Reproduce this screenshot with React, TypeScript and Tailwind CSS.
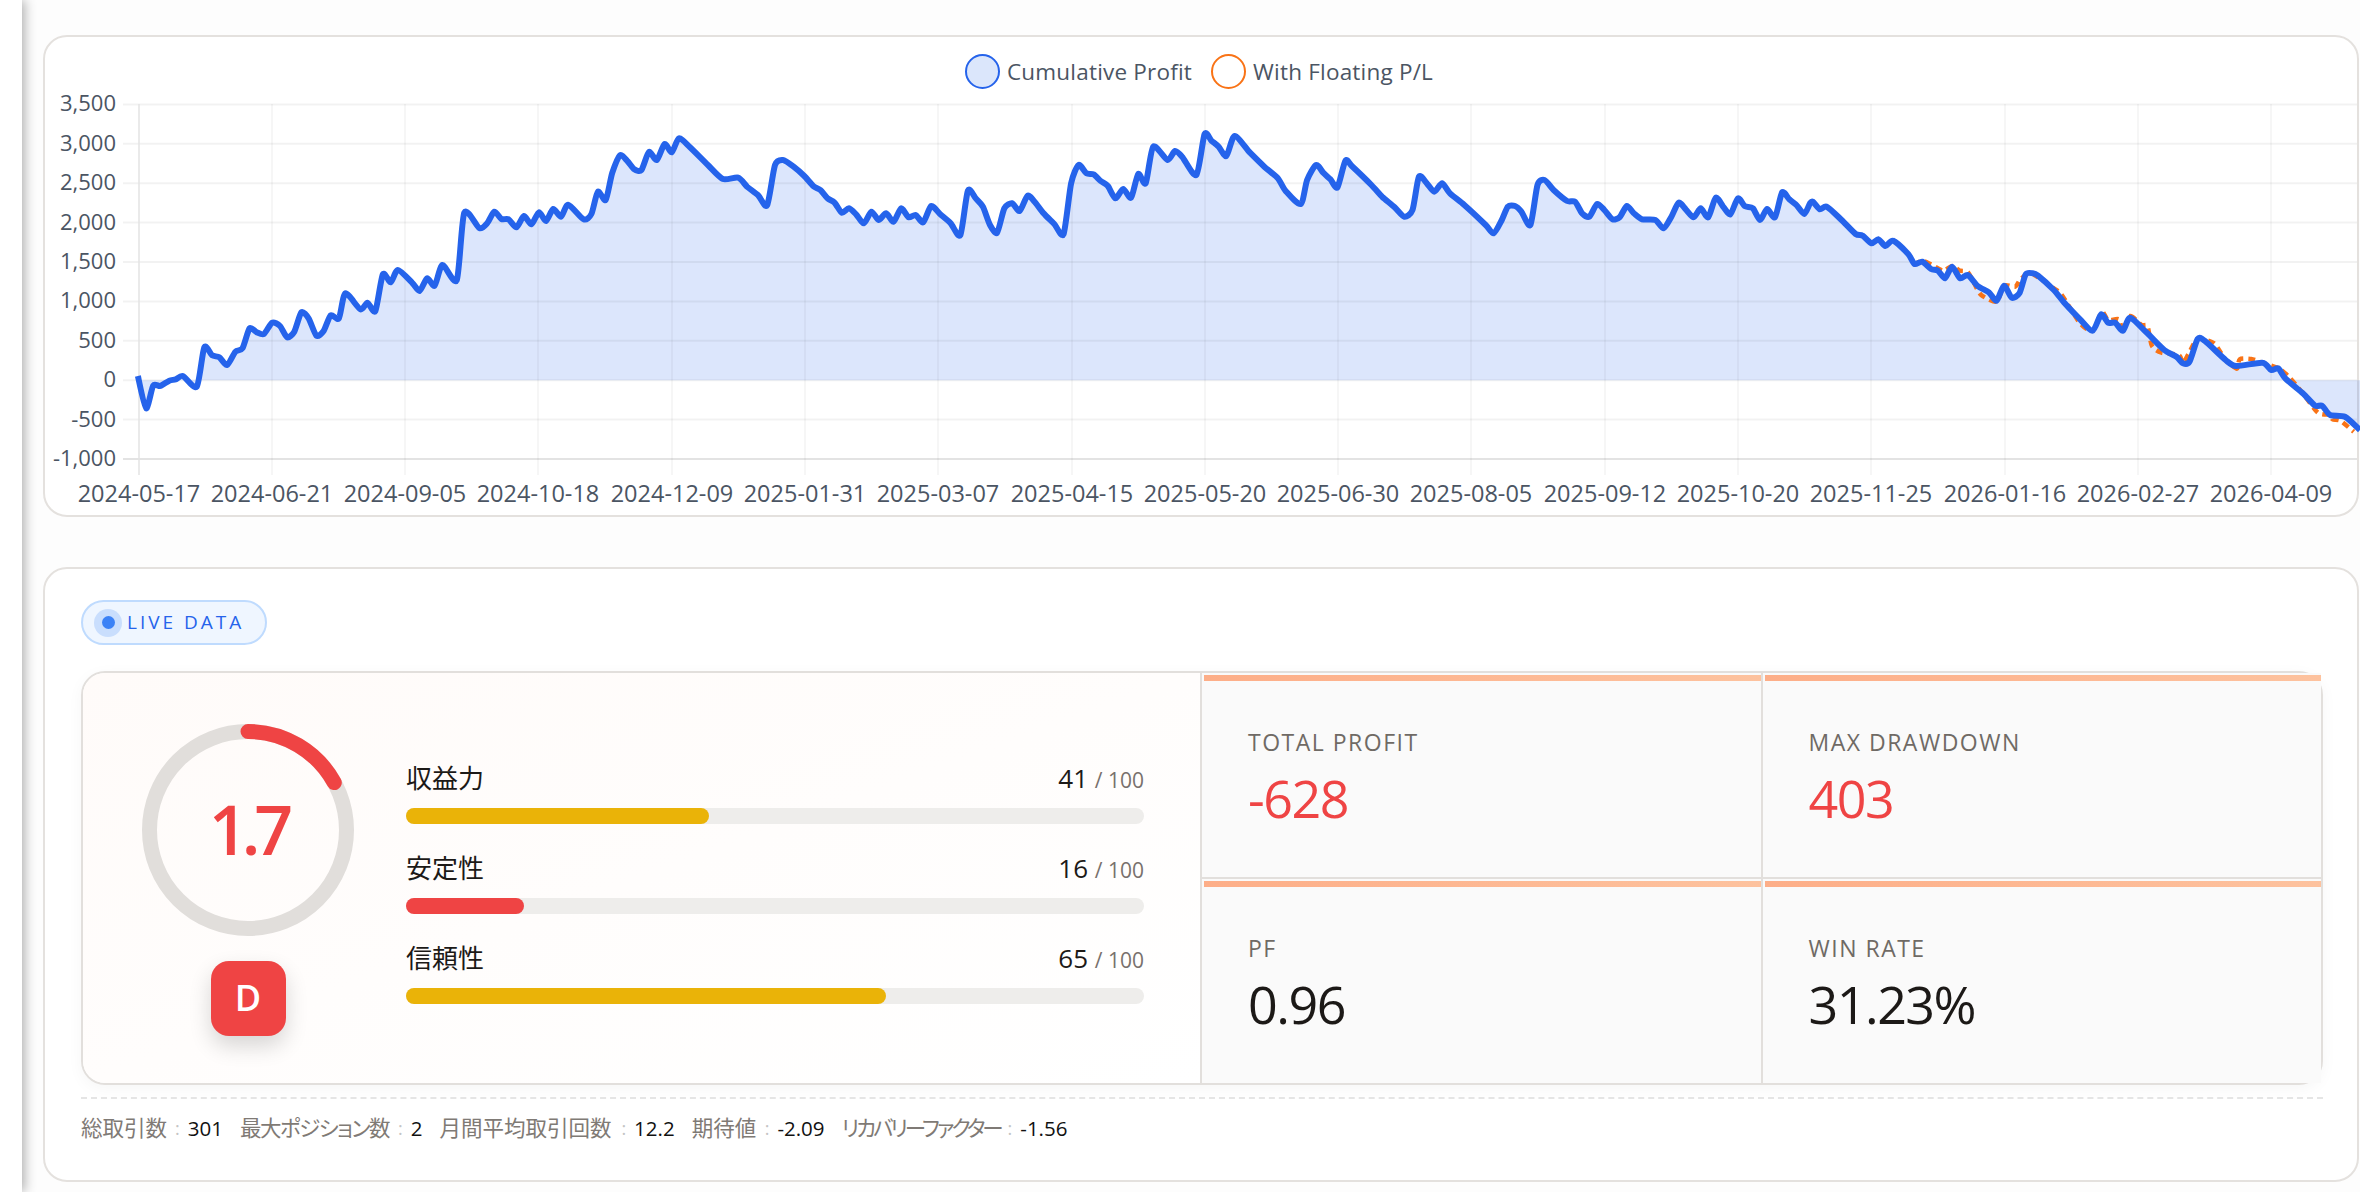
import React from "react";

type Pt = [number, number];

// traced from the chart, [x, y] in the zoomed crop's units
const seg = (x0: number, sx: number, y0: number, pts: Pt[]): Pt[] =>
  pts.map(([x, y]) => [x0 + x / sx, y0 + y / 3]);

const profit: Pt[] = [
  ...seg(130, 2.8, 130, [
    [22, 738], [45, 835], [65, 767], [85, 768], [110, 752], [128, 748], [148, 738], [187, 770], [208, 652], [230, 676],
    [250, 682], [272, 705], [295, 665], [315, 655], [335, 595], [355, 607], [375, 612], [398, 578], [420, 588], [440, 622],
    [460, 605], [480, 547], [500, 565], [522, 617], [542, 603], [562, 556], [585, 565], [603, 490], [645, 538], [665, 518],
    [687, 543], [708, 433], [730, 457], [750, 420], [790, 458], [811, 483], [832, 445], [853, 467], [875, 405], [915, 450],
    [936, 248], [978, 294], [1000, 280], [1020, 245], [1040, 267], [1060, 268], [1082, 292], [1103, 258], [1124, 283], [1145, 247],
    [1165, 273], [1185, 237], [1207, 260], [1227, 224], [1270, 268], [1292, 252], [1310, 185], [1332, 210], [1350, 130], [1372, 76],
    [1392, 92], [1412, 118], [1432, 120], [1453, 66], [1475, 90], [1497, 42], [1517, 67], [1537, 25],
  ]),
  ...seg(690, 2.8, 130, [
    [0, 52], [50, 105], [92, 147], [135, 143], [160, 170], [190, 195], [216, 226], [238, 105], [260, 90], [290, 110],
    [320, 138], [345, 168], [365, 180], [385, 205], [405, 218], [425, 248], [445, 235], [465, 253], [487, 280], [508, 245],
    [528, 270], [549, 250], [570, 275], [591, 235], [612, 262], [632, 255], [653, 277], [675, 228], [700, 252], [730, 280],
    [757, 315], [778, 182], [800, 205], [820, 230], [840, 285], [860, 308], [880, 235], [902, 220], [923, 243], [945, 197],
    [965, 215], [990, 250], [1020, 282], [1046, 312], [1067, 160], [1088, 105], [1110, 130], [1130, 133], [1150, 153], [1170, 168],
    [1191, 205], [1213, 177], [1235, 203], [1255, 132], [1276, 160], [1297, 50], [1337, 90], [1358, 63], [1378, 80], [1418, 135],
    [1441, 12], [1460, 32], [1480, 50], [1502, 78], [1525, 18],
  ]),
  ...seg(1250, 2.8, 130, [
    [0, 68], [40, 110], [78, 145], [100, 183], [142, 222], [160, 150], [185, 105], [205, 128], [225, 148], [245, 172],
    [267, 92], [285, 108], [340, 165], [370, 200], [405, 232], [432, 260], [455, 240], [473, 140], [495, 160], [516, 185],
    [538, 160], [560, 190], [600, 225], [660, 285], [682, 310], [705, 270], [722, 230], [742, 228], [760, 245], [785, 285],
    [805, 165], [825, 150], [850, 180], [888, 213], [910, 215], [930, 250], [950, 260], [972, 222], [992, 240], [1015, 268],
    [1035, 262], [1055, 228], [1075, 250], [1098, 268], [1135, 270], [1158, 295], [1180, 260], [1200, 218], [1220, 238], [1242, 262],
    [1262, 235], [1283, 262], [1304, 203], [1325, 230], [1345, 253], [1366, 205], [1385, 228], [1408, 235], [1428, 270], [1448, 237],
    [1470, 262], [1490, 187], [1510, 208], [1530, 225], [1552, 252],
  ]),
  ...seg(1810, 2.851, 180, [
    [0, 70], [8, 65], [28, 88], [48, 80], [90, 120], [130, 162], [150, 167], [175, 190], [195, 178], [215, 198],
    [237, 182], [280, 222], [298, 252], [320, 245], [345, 267], [365, 272], [385, 295], [405, 260], [428, 295], [450, 285],
    [478, 318], [510, 337], [532, 362], [553, 317], [575, 353], [597, 340], [615, 283], [635, 280], [650, 287], [695, 330],
    [725, 368], [770, 418], [806, 452], [830, 403], [850, 428], [870, 428], [892, 452], [913, 413], [960, 458], [1010, 510],
    [1045, 530], [1063, 550], [1082, 545], [1105, 477], [1125, 482], [1185, 540], [1215, 558], [1290, 548], [1315, 570], [1335, 565],
    [1355, 595], [1405, 640], [1440, 677], [1460, 677], [1483, 705], [1525, 710], [1568, 750],
  ]),
];

// only the tail separates from the blue line
const floating: Pt[] = seg(1810, 2.851, 180, [
  [296, 255], [320, 243], [345, 253], [380, 272], [405, 258], [428, 272], [450, 276], [468, 310], [488, 345], [532, 365],
  [553, 317], [585, 320], [600, 298], [630, 280], [695, 325], [718, 345], [770, 430], [806, 452], [832, 396], [850, 420],
  [880, 418], [892, 452], [913, 408], [945, 435], [962, 438], [975, 498], [1002, 518], [1052, 525], [1063, 550], [1080, 520],
  [1105, 477], [1152, 490], [1185, 540], [1217, 566], [1225, 538], [1258, 537], [1290, 548], [1335, 565], [1365, 590], [1405, 640],
  [1448, 698], [1483, 705], [1490, 718], [1512, 722], [1550, 755],
]);

const smooth = (pts: Pt[]) => {
  let d = `M${pts[0][0].toFixed(1)} ${pts[0][1].toFixed(1)}`;
  for (let i = 0; i < pts.length - 1; i++) {
    const p0 = pts[i - 1] ?? pts[i];
    const p1 = pts[i];
    const p2 = pts[i + 1];
    const p3 = pts[i + 2] ?? p2;
    const k = 0.12;
    d += `C${(p1[0] + (p2[0] - p0[0]) * k).toFixed(1)} ${(p1[1] + (p2[1] - p0[1]) * k).toFixed(1)} ${(p2[0] - (p3[0] - p1[0]) * k).toFixed(1)} ${(p2[1] - (p3[1] - p1[1]) * k).toFixed(1)} ${p2[0].toFixed(1)} ${p2[1].toFixed(1)}`;
  }
  return d;
};

const yTicks = [3500, 3000, 2500, 2000, 1500, 1000, 500, 0, -500, -1000];
const yOf = (v: number) => 380.2 - v * 0.0788;
const xTicks: [number, string][] = [
  [139, "2024-05-17"], [272, "2024-06-21"], [405, "2024-09-05"], [538, "2024-10-18"], [672, "2024-12-09"],
  [805, "2025-01-31"], [938, "2025-03-07"], [1072, "2025-04-15"], [1205, "2025-05-20"], [1338, "2025-06-30"],
  [1471, "2025-08-05"], [1605, "2025-09-12"], [1738, "2025-10-20"], [1871, "2025-11-25"], [2005, "2026-01-16"],
  [2138, "2026-02-27"], [2271, "2026-04-09"],
];

function ProfitChart() {
  const line = smooth(profit);
  const last = profit[profit.length - 1];
  return (
    <svg width={2312} height={423} viewBox="45 92 2312 423" className="block overflow-visible">
      <path d={`${line}L${last[0]} 380.2L${profit[0][0]} 380.2Z`} fill="#2563eb" fillOpacity={0.16} />
      {yTicks.map((v) => (
        <g key={v}>
          <line x1={123} x2={2357} y1={yOf(v)} y2={yOf(v)} stroke={v === -1000 ? "#e3e3e3" : "#000"} strokeOpacity={v === -1000 ? 1 : 0.05} strokeWidth={2} />
          <text x={116} y={yOf(v) + 7} textAnchor="end" fontSize={22} fill="#4b5563">
            {v.toLocaleString("en-US")}
          </text>
        </g>
      ))}
      {xTicks.map(([x, label], i) => (
        <g key={label}>
          <line x1={x} x2={x} y1={104} y2={475} stroke={i === 0 ? "#e3e3e3" : "#000"} strokeOpacity={i === 0 ? 1 : 0.05} strokeWidth={1.5} />
          <text x={x} y={502} textAnchor="middle" fontSize={23.5} fill="#4b5563">
            {label}
          </text>
        </g>
      ))}
      <path d={smooth(floating)} fill="none" stroke="#f97316" strokeWidth={4.5} strokeDasharray="7 5" />
      <path d={line} fill="none" stroke="#2563eb" strokeWidth={6} strokeLinejoin="round" />
    </svg>
  );
}

function ScoreRing() {
  return (
    <svg width={212} height={212} viewBox="0 0 212 212">
      <circle cx={106} cy={106} r={98.5} fill="none" stroke="#e1dedb" strokeWidth={15} />
      <path d="M106 7.5A98.5 98.5 0 0 1 192.3 58.6" fill="none" stroke="#ef4444" strokeWidth={15} strokeLinecap="round" />
    </svg>
  );
}

const bars = [
  { label: "収益力", score: 41, cls: "w-[41%] bg-[#eab308]" },
  { label: "安定性", score: 16, cls: "w-[16%] bg-[#ef4444]" },
  { label: "信頼性", score: 65, cls: "w-[65%] bg-[#eab308]" },
];

const cells = [
  { label: "TOTAL PROFIT", value: "-628", cls: "text-[#ef4444]" },
  { label: "MAX DRAWDOWN", value: "403", cls: "text-[#ef4444]" },
  { label: "PF", value: "0.96", cls: "text-[#1c1917]" },
  { label: "WIN RATE", value: "31.23%", cls: "text-[#1c1917]" },
];

const facts = [
  { label: "総取引数", value: "301", cls: "w-[86px]" },
  { label: "最大ポジション数", value: "2", cls: "w-[150px] tracking-[-1.5px]" },
  { label: "月間平均取引回数", value: "12.2", cls: "w-[174px]" },
  { label: "期待値", value: "-2.09", cls: "w-[65px]" },
  { label: "リカバリーファクター", value: "-1.56", cls: "w-[158px] tracking-[-3px]" },
];

export default function App() {
  return (
    <div className="flex h-[1192px] overflow-hidden bg-[#fdfdfd] font-['Open_Sans','Noto_Sans_CJK_JP',sans-serif] [font-feature-settings:'palt']">
      <div className="w-[22px] shrink-0 bg-white shadow-[3px_0_12px_rgba(0,0,0,0.3)]" />

      <div className="flex flex-1 flex-col gap-[50px] pl-[21px] pr-px pt-[35px]">
        {/* chart card */}
        <div className="h-[482px] rounded-[24px] border-2 border-[#e4e1de] bg-white">
          <div className="flex h-[55px] items-start justify-center pr-[4px] pt-[17px]">
            <div className="flex h-[35px] items-center text-[22.5px] tracking-[0.2px] text-[#4b5563]">
              <span className="h-[35px] w-[35px] rounded-full border-[2.5px] border-[#2563eb] bg-[#dbe6fb]" />
              <span className="ml-[7px] mr-[19px]">Cumulative Profit</span>
              <span className="h-[35px] w-[35px] rounded-full border-[2.5px] border-[#f97316] bg-white" />
              <span className="ml-[7px]">With Floating P/L</span>
            </div>
          </div>
          <ProfitChart />
        </div>

        {/* rating card */}
        <div className="h-[615px] rounded-[24px] border-2 border-[#e4e1de] bg-white pl-[36px] pr-[34px] pt-[31px]">
          <div className="flex h-[45px] w-[186px] items-center rounded-full border-2 border-[#bfdbfe] bg-[#eff6ff] pl-[11px]">
            <span className="flex h-[28px] w-[28px] items-center justify-center rounded-full bg-[#c9defd]">
              <span className="h-[13px] w-[13px] rounded-full bg-[#3b82f6]" />
            </span>
            <span className="ml-[5px] text-[19px] tracking-[3px] text-[#2563eb]">LIVE DATA</span>
          </div>

          <div className="mt-[26px] flex h-[414px] rounded-[24px] border-2 border-[#e2dfdc] bg-white shadow-[0_4px_16px_rgba(0,0,0,0.04)]">
            <div className="flex w-[1117px] items-center gap-[52px] rounded-l-[22px] bg-gradient-to-br from-[#fffbf9] to-white pl-[59px] pr-[56px]">
              <div className="flex flex-col items-center gap-[25px] pt-[3px]">
                <div className="relative h-[212px] w-[212px]">
                  <ScoreRing />
                  <span className="absolute inset-0 flex items-center justify-center pb-[2px] text-[68px] font-semibold tracking-[-6px] text-[#ef4444]">1.7</span>
                </div>
                <div className="flex h-[75px] w-[75px] items-center justify-center rounded-[18px] bg-[#ef4444] text-[36px] font-semibold text-white shadow-[0_10px_22px_rgba(0,0,0,0.16)]">
                  D
                </div>
              </div>
              <div className="flex flex-1 flex-col gap-[27px] pt-[9px]">
                {bars.map((b) => (
                  <div key={b.label}>
                    <div className="flex h-[34px] items-center justify-between text-[#1c1917]">
                      <span className="text-[26px]">{b.label}</span>
                      <span className="text-[26px]">
                        {b.score} <span className="text-[21px] text-[#78716c]">/ 100</span>
                      </span>
                    </div>
                    <div className="mt-[13px] h-[16px] rounded-full bg-[#eeedeb]">
                      <div className={`h-full rounded-full ${b.cls}`} />
                    </div>
                  </div>
                ))}
              </div>
            </div>

            <div className="grid flex-1 grid-cols-2 grid-rows-2 gap-[2px] border-l-2 border-[#e2dfdc] bg-[#e2dfdc]">
              {cells.map((c) => (
                <div key={c.label} className="flex flex-col bg-[#fafafa]">
                  <div className="ml-[2px] mt-[2px] h-[6px] bg-gradient-to-r from-[#fdae88] to-[#fdc29e]" />
                  <div className="flex flex-1 flex-col justify-center gap-[10px] pb-[4px] pl-[46px]">
                    <span className="text-[23px] font-medium leading-[31px] tracking-[1.5px] text-[#6f6a65]">{c.label}</span>
                    <span className={`text-[52px] font-medium leading-[60px] tracking-[-1.5px] ${c.cls}`}>{c.value}</span>
                  </div>
                </div>
              ))}
            </div>
          </div>

          <div className="mt-[12px] flex h-[60px] items-center gap-[17px] border-t-2 border-dashed border-[#e5e5e5] text-[#7f7a75]">
            {facts.map((f) => (
              <div key={f.label} className="flex items-center">
                <span className={`whitespace-nowrap text-[21.5px] ${f.cls}`}>{f.label}</span>
                <span className="mx-[8px] text-[18px] text-[#c4c4c4]">:</span>
                <span className="text-[20.5px] font-medium text-[#111]">{f.value}</span>
              </div>
            ))}
          </div>
        </div>
      </div>
    </div>
  );
}
